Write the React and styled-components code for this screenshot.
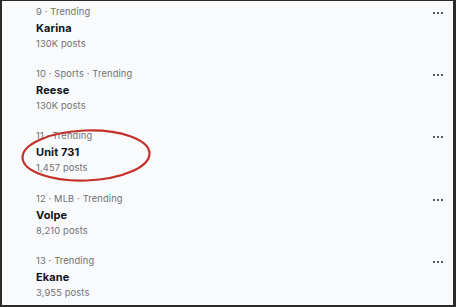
import React from 'react';
import styled, { createGlobalStyle } from 'styled-components';

const GlobalStyle = createGlobalStyle`
html, body {
  margin: 0;
  padding: 0;
  background: #2b2b2b;
}
* { box-sizing: border-box; }
`;

const Frame = styled.div`
position: relative;
width: 456px;
height: 307px;
overflow: hidden;
background: #f9fafc;
border-style: solid;
border-color: #2b2b2b;
border-width: 1px 3px 2px 2px;
font-family: 'Inter', 'Roboto', sans-serif;
`;

const List = styled.div`
display: flex;
flex-direction: column;
padding: 3px 10px 0 34px;
`;

const Row = styled.div`
display: flex;
flex-direction: row;
justify-content: space-between;
align-items: flex-start;
height: 62.2px;
`;

const Info = styled.div`
display: flex;
flex-direction: column;
`;

const Meta = styled.div`
font-size: 9.3px;
line-height: 16px;
color: #6e7174;
letter-spacing: 0.15px;
`;

const Name = styled.div`
font-size: 11px;
line-height: 16px;
font-weight: 700;
color: #0f1419;
letter-spacing: 0.1px;
`;

const Posts = styled.div`
font-size: 9.3px;
line-height: 16px;
color: #6e7174;
letter-spacing: 0.15px;
`;

const More = styled.div`
display: flex;
gap: 2px;
padding-top: 8px;
`;

const Dot = styled.span`
width: 2px;
height: 2px;
background: #56585b;
`;

const Circle = styled.svg`
position: absolute;
left: 0;
top: 0;
pointer-events: none;
`;

const trends = [
  { meta: '9 · Trending', name: 'Karina', posts: '130K posts' },
  { meta: '10 · Sports · Trending', name: 'Reese', posts: '130K posts' },
  { meta: '11 · Trending', name: 'Unit 731', posts: '1,457 posts' },
  { meta: '12 · MLB · Trending', name: 'Volpe', posts: '8,210 posts' },
  { meta: '13 · Trending', name: 'Ekane', posts: '3,955 posts' },
];

const App = () => {
  return (
    <>
      <GlobalStyle />
      <Frame>
        <List>
          {trends.map((t) => (
            <Row key={t.name}>
              <Info>
                <Meta>{t.meta}</Meta>
                <Name>{t.name}</Name>
                <Posts>{t.posts}</Posts>
              </Info>
              <More>
                <Dot /><Dot /><Dot />
              </More>
            </Row>
          ))}
        </List>
        <Circle width="456" height="307" viewBox="0 0 456 307">
          <ellipse cx="84" cy="154.5" rx="63.5" ry="25" fill="none" stroke="#c3312a" strokeWidth="2.2" transform="rotate(-2 84 154.5)" />
        </Circle>
      </Frame>
    </>
  );
};

export default App;
